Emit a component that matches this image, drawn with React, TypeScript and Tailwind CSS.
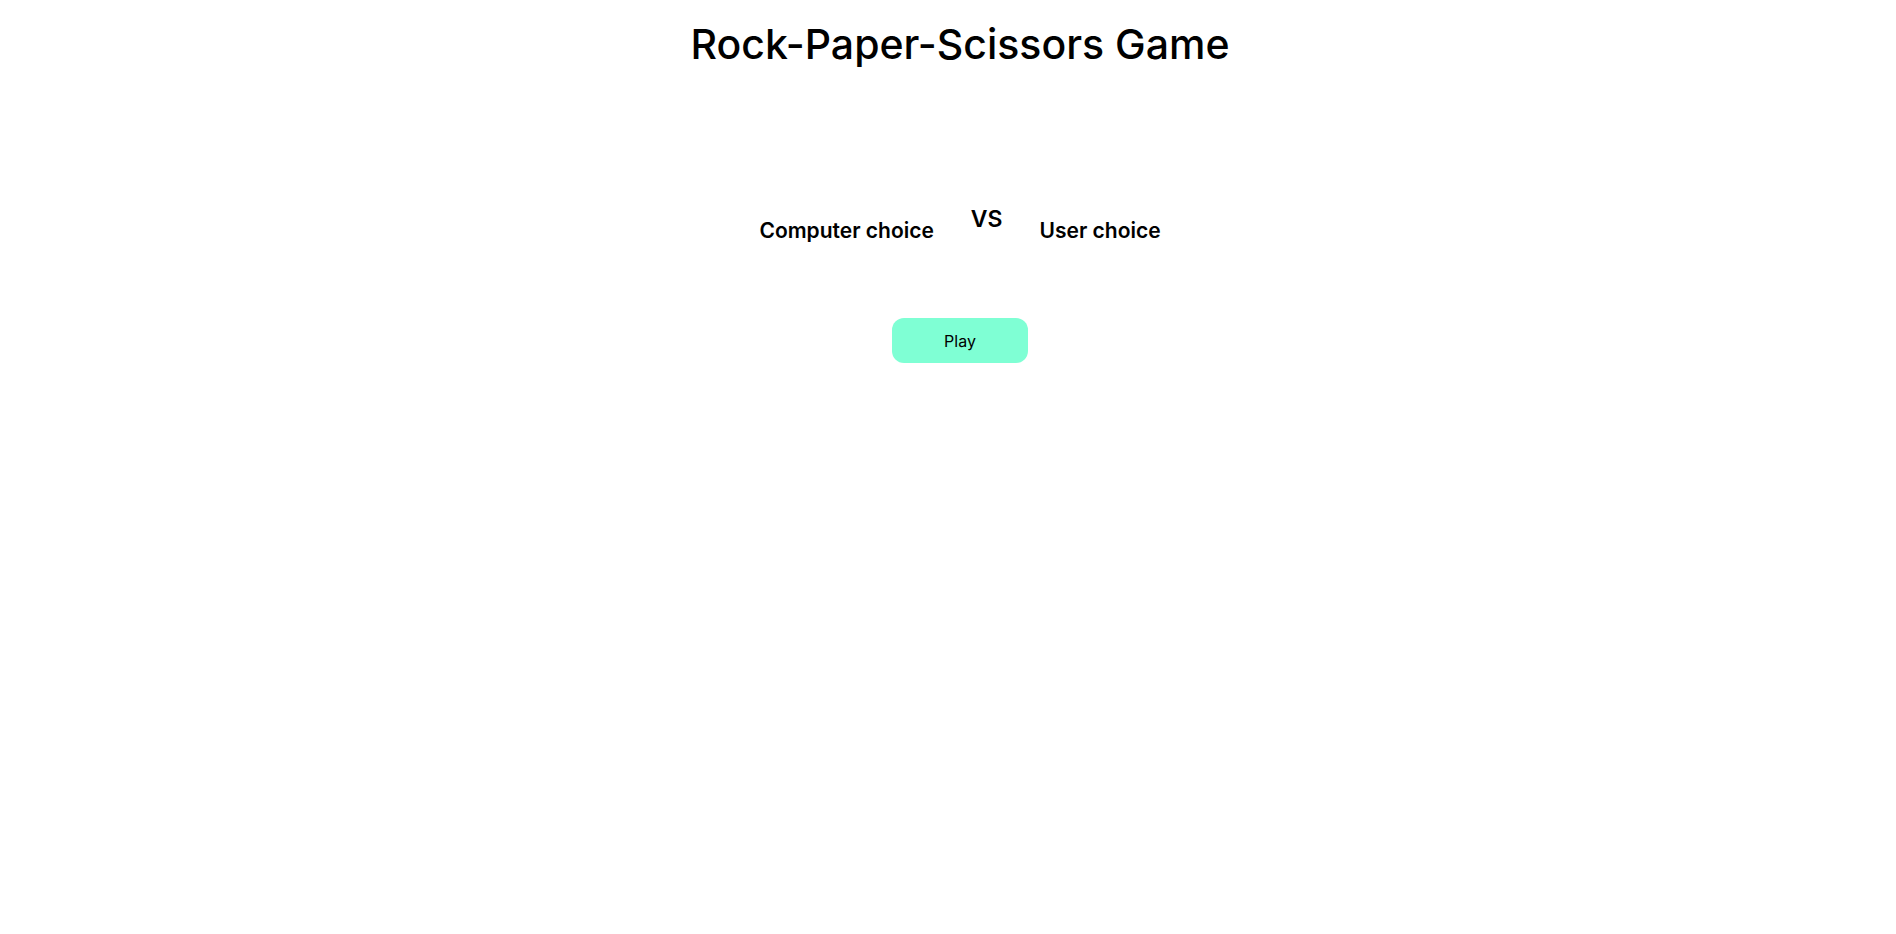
export default function App() {
  return (
    <div className="min-h-screen bg-white pl-[24px] text-black" style={{ fontFamily: 'Inter, "Noto Sans", sans-serif' }}>
      <h1 className="pt-[22px] text-center text-[41px] font-medium leading-[44px]">Rock-Paper-Scissors Game</h1>

      <div className="mt-[141px] flex justify-center">
        <h3 className="mt-[12px] text-[21px] font-semibold leading-[24px]">Computer choice</h3>
        <h2 className="mx-[37px] mt-[-2px] text-[23px] font-semibold leading-[28px]">VS</h2>
        <h3 className="mt-[12px] text-[21px] font-semibold leading-[24px]">User choice</h3>
      </div>

      <div className="mt-[75px] flex justify-center">
        <button className="h-[45px] w-[136px] rounded-xl bg-[#7fffd4] text-base">Play</button>
      </div>
    </div>
  )
}
